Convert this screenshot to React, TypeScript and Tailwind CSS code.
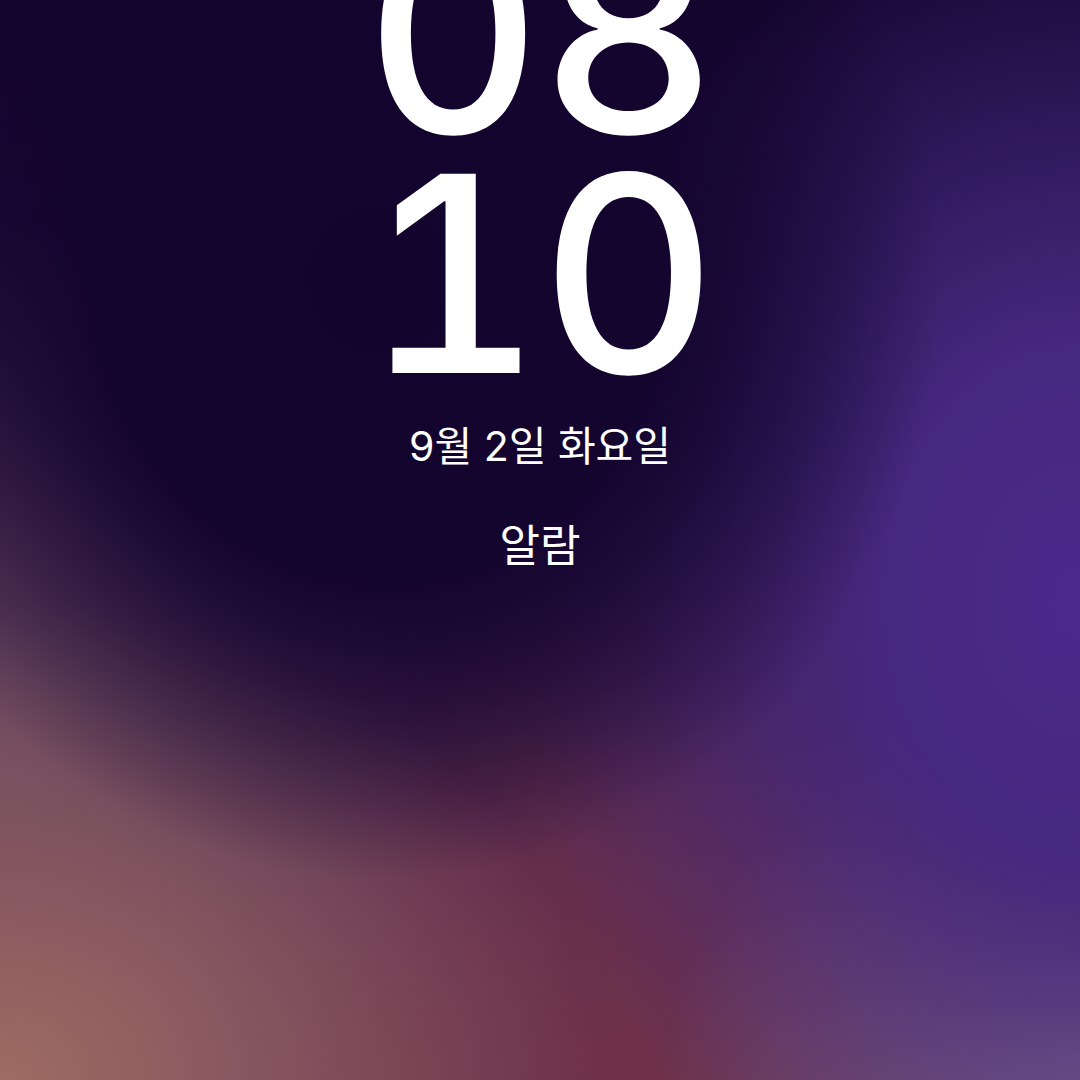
export default function App() {
  return (
    <div className="relative flex h-[1080px] w-[1080px] flex-col items-center overflow-hidden bg-[#14052f] bg-[image:radial-gradient(ellipse_560px_600px_at_380px_280px,#12042c_0%,#14052f_50%,rgba(20,5,47,0)_100%),radial-gradient(ellipse_560px_720px_at_1080px_600px,#4a2a8c_0%,#45287f_35%,rgba(69,40,127,0)_100%),radial-gradient(ellipse_600px_480px_at_0px_1080px,#9e6c62_0%,#8a5a60_35%,rgba(130,84,96,0)_100%),radial-gradient(ellipse_440px_560px_at_0px_780px,#66465f_0%,#5a3a5a_35%,rgba(85,52,88,0)_100%),radial-gradient(ellipse_420px_360px_at_1080px_1080px,#84708a_0%,rgba(132,112,138,0)_100%),radial-gradient(ellipse_520px_420px_at_620px_1080px,#6e3048_0%,rgba(110,48,72,0)_100%),linear-gradient(to_bottom,#14052f_0%,#1e0a36_40%,#5a2c50_80%,#6a3450_100%)] font-['Inter','Noto_Sans_CJK_KR',sans-serif] text-white">
      {/* clock */}
      <div className="mt-[-86px] flex flex-col items-center text-[274px] font-medium leading-[240px] tracking-[-2px] tabular-nums">
        <span>08</span>
        <span>10</span>
      </div>

      {/* date + alarm */}
      <div className="mt-[28px] text-[41px] leading-[48px]">9월 2일 화요일</div>
      <div className="mt-[50px] text-[44px] leading-[52px]">알람</div>
    </div>
  );
}
